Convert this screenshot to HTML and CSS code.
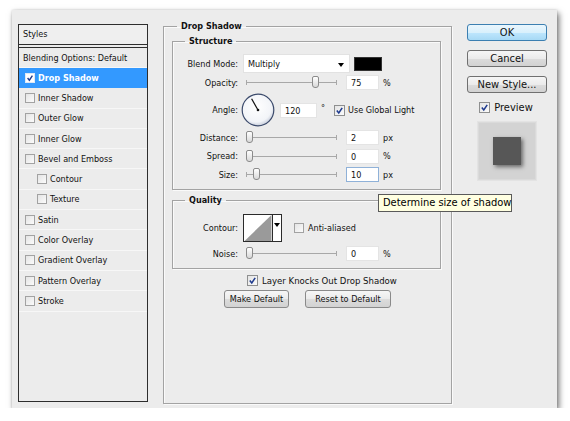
FILE: index.html
```html
<!DOCTYPE html>
<html>
<head>
<meta charset="utf-8">
<link rel="stylesheet" href="styles.css">
</head>
<body>
<div class="dialog">
  <div class="styles-panel">
    <div class="styles-head">Styles</div>
    <ul class="styles-list">
      <li class="row first">Blending Options: Default</li>
      <li class="row active"><span class="cb on"><svg viewBox="0 0 10 10"><polyline points="2,5 4.2,7.8 8,2"/></svg></span>Drop Shadow</li>
      <li class="row"><span class="cb"></span>Inner Shadow</li>
      <li class="row"><span class="cb"></span>Outer Glow</li>
      <li class="row"><span class="cb"></span>Inner Glow</li>
      <li class="row"><span class="cb"></span>Bevel and Emboss</li>
      <li class="row sub"><span class="cb"></span>Contour</li>
      <li class="row sub"><span class="cb"></span>Texture</li>
      <li class="row"><span class="cb"></span>Satin</li>
      <li class="row"><span class="cb"></span>Color Overlay</li>
      <li class="row"><span class="cb"></span>Gradient Overlay</li>
      <li class="row"><span class="cb"></span>Pattern Overlay</li>
      <li class="row"><span class="cb"></span>Stroke</li>
    </ul>
  </div>

  <fieldset class="group main">
    <legend class="lg-main">Drop Shadow</legend>
    <fieldset class="group inner structure">
      <legend class="lg-sub">Structure</legend>
      <div class="frow blend">
        <label class="lbl">Blend Mode:</label>
        <span class="select">Multiply<span class="arrow"></span></span>
        <span class="swatch"></span>
      </div>
      <div class="frow opacity">
        <label class="lbl">Opacity:</label>
        <span class="slider"><span class="thumb" style="left:66px"></span></span>
        <span class="num">75</span>
        <span class="unit">%</span>
      </div>
      <div class="frow angle">
        <label class="lbl">Angle:</label>
        <svg class="dial" viewBox="0 0 34 34" width="34" height="34">
          <defs>
            <radialGradient id="dg" cx="45%" cy="40%" r="60%">
              <stop offset="0" stop-color="#ffffff"/>
              <stop offset="0.8" stop-color="#f2f4f8"/>
              <stop offset="1" stop-color="#c9cfdc"/>
            </radialGradient>
          </defs>
          <circle cx="17" cy="17" r="15.8" fill="url(#dg)" stroke="#3b4a6b" stroke-width="1.2"/>
          <line x1="17" y1="17" x2="10.6" y2="5.7" stroke="#111" stroke-width="1.2"/>
          <circle cx="17" cy="17" r="1.3" fill="#111"/>
        </svg>
        <span class="num deg">120</span>
        <span class="unit degsym">°</span>
        <span class="cb on big"><svg viewBox="0 0 10 10"><polyline points="2,5 4.2,7.8 8,2"/></svg></span>
        <span class="cbtext">Use Global Light</span>
      </div>
      <div class="frow distance">
        <label class="lbl">Distance:</label>
        <span class="slider"><span class="thumb" style="left:0px"></span></span>
        <span class="num">2</span>
        <span class="unit">px</span>
      </div>
      <div class="frow spread">
        <label class="lbl">Spread:</label>
        <span class="slider"><span class="thumb" style="left:0px"></span></span>
        <span class="num">0</span>
        <span class="unit">%</span>
      </div>
      <div class="frow size">
        <label class="lbl">Size:</label>
        <span class="slider"><span class="thumb" style="left:7px"></span></span>
        <span class="num focus">10</span>
        <span class="unit">px</span>
      </div>
    </fieldset>

    <fieldset class="group inner quality">
      <legend class="lg-sub">Quality</legend>
      <div class="frow contour">
        <label class="lbl">Contour:</label>
        <span class="curve">
          <svg viewBox="0 0 29 28" width="29" height="28"><polygon points="0,28 29,0 29,28" fill="#9a9a9a"/></svg>
          <span class="drop"><span class="arrow"></span></span>
        </span>
        <span class="cb"></span>
        <span class="cbtext">Anti-aliased</span>
      </div>
      <div class="frow noise">
        <label class="lbl">Noise:</label>
        <span class="slider"><span class="thumb" style="left:0px"></span></span>
        <span class="num">0</span>
        <span class="unit">%</span>
      </div>
    </fieldset>

    <div class="knock">
      <span class="cb on big"><svg viewBox="0 0 10 10"><polyline points="2,5 4.2,7.8 8,2"/></svg></span>
      <span class="cbtext">Layer Knocks Out Drop Shadow</span>
    </div>
    <div class="defaults">
      <button class="btn small make">Make Default</button>
      <button class="btn small reset">Reset to Default</button>
    </div>
  </fieldset>

  <div class="side">
    <button class="btn big ok">OK</button>
    <button class="btn big">Cancel</button>
    <button class="btn big">New Style...</button>
    <div class="preview-row">
      <span class="cb on big"><svg viewBox="0 0 10 10"><polyline points="2,5 4.2,7.8 8,2"/></svg></span>
      <span class="pv-text">Preview</span>
    </div>
    <div class="preview"><span class="pv-square"></span></div>
  </div>

  <div class="tooltip">Determine size of shadow</div>
</div>
</body>
</html>
```

FILE: styles.css
```css
* { box-sizing: border-box; }

body {
  margin: 0;
  background: #ffffff;
  font-family: "DejaVu Sans Condensed", "DejaVu Sans", "Liberation Sans", sans-serif;
  font-stretch: condensed;
  font-size: 9px;
  color: #111;
}

.dialog {
  position: relative;
  display: flex;
  align-items: stretch;
  margin: 10px 0 0 12px;
  width: 545px;
  height: 398px;
  padding: 10px 10px 4px 6px;
  background: #ececec;
  box-shadow: 2px 3px 6px rgba(0, 0, 0, 0.55), 0 0 2px rgba(0, 0, 0, 0.15);
}

/* ---------- Styles list ---------- */
.styles-panel {
  width: 130px;
  flex: none;
  margin: 4px 0 2px 0;
  border: 1px solid #2e2e2e;
  display: flex;
  flex-direction: column;
  background: #ececec;
}

.styles-head {
  height: 20px;
  line-height: 19px;
  padding-left: 4px;
  border-bottom: 1px solid #2e2e2e;
  margin-bottom: 2px;
  background: #efefef;
}

.styles-list {
  list-style: none;
  margin: 0;
  padding: 0;
  flex: 1;
  border-top: 1px solid #2e2e2e;
}

.row {
  display: flex;
  align-items: center;
  height: 20.3px;
  padding-left: 6px;
  border-bottom: 1px solid #f7f7f7;
  white-space: nowrap;
}

.row.first {
  height: 20px;
  padding-left: 4px;
}

.row.sub { padding-left: 18px; }

.row .cb { margin-right: 3px; }

.row.active {
  background: #3399ff;
  color: #fff;
  font-weight: bold;
  border-bottom-color: #3399ff;
}

/* ---------- checkboxes ---------- */
.cb {
  display: inline-flex;
  flex: none;
  width: 10px;
  height: 10px;
  border: 1px solid #a2a2a2;
  background: linear-gradient(135deg, #e4e4e4, #fbfbfb);
}

.cb.big {
  width: 11px;
  height: 11px;
  border-color: #8e8f8f;
}

.cb svg {
  width: 100%;
  height: 100%;
  display: block;
}

.cb polyline {
  fill: none;
  stroke: #1f3b8e;
  stroke-width: 1.7;
}

.row.active .cb {
  background: #fff;
  border-color: #dfe9f5;
}

.cbtext { white-space: nowrap; }

/* ---------- group boxes ---------- */
.group {
  margin: 0;
  min-width: 0;
  border: 1px solid #a3a3a3;
  box-shadow: 1px 1px 0 #fafafa, inset 1px 1px 0 #fafafa;
}

.main {
  width: 289px;
  flex: none;
  margin-left: 15px;
  padding: 0 10px 0 8px;
}

legend {
  font-weight: bold;
  line-height: 12px;
  padding: 0 4px;
  color: #111;
}

.lg-main { margin-left: 5px; }
.lg-sub { margin-left: 12px; }

.inner {
  padding: 0 0 7px 0;
}

.structure { margin-top: 3px; }
.quality { margin-top: 4px; padding-bottom: 7px; }

/* ---------- form rows ---------- */
.frow {
  display: flex;
  align-items: center;
  white-space: nowrap;
}

.lbl {
  width: 65px;
  flex: none;
  text-align: right;
}

.blend { margin-top: 7px; height: 19px; }
.opacity { margin-top: 2px; height: 15px; }
.angle { margin-top: 3px; height: 34px; }
.distance { margin-top: 3px; height: 15px; }
.spread { margin-top: 3.5px; height: 15px; }
.size { margin-top: 3.5px; height: 15px; }
.contour { margin-top: 8px; height: 28px; }
.noise { margin-top: 4px; height: 15px; }

.select {
  position: relative;
  margin-left: 5px;
  width: 107px;
  height: 19px;
  line-height: 18px;
  padding-left: 4px;
  background: #fff;
  border: 1px solid #e2e2e2;
}

.arrow {
  position: absolute;
  right: 5px;
  top: 8px;
  width: 0;
  height: 0;
  border-left: 3px solid transparent;
  border-right: 3px solid transparent;
  border-top: 4px solid #000;
}

.swatch {
  margin-left: 4px;
  width: 28px;
  height: 14px;
  background: #000;
  border: 1px solid #333;
}

.slider {
  position: relative;
  margin-left: 8px;
  width: 91px;
  height: 15px;
  flex: none;
}

.slider::before {
  content: "";
  position: absolute;
  left: 0;
  right: 0;
  top: 7px;
  height: 1px;
  background: #a8a8a8;
}

.slider::after {
  content: "";
  position: absolute;
  left: 0;
  right: 0;
  top: 5px;
  height: 5px;
  border-left: 1px solid #a8a8a8;
  border-right: 1px solid #a8a8a8;
}

.thumb {
  position: absolute;
  top: 1px;
  width: 7px;
  height: 12px;
  border: 1px solid #8b8b8b;
  border-radius: 2px 2px 3px 3px;
  background: linear-gradient(#ffffff, #d8d8d8);
  z-index: 1;
}

.num {
  margin-left: 9px;
  width: 33px;
  height: 15px;
  line-height: 14px;
  padding-left: 4px;
  background: #fff;
  border: 1px solid #e4e4e4;
  flex: none;
}

.num.focus { border-color: #8fb1d8; }

.num.deg {
  margin-left: 5px;
  width: 37px;
}

.unit { margin-left: 4px; }

.degsym { margin-left: 4px; margin-top: -4px; }

.angle .dial { margin-left: 3px; flex: none; }

.angle .cb { margin-left: 9px; margin-right: 3px; }

.curve {
  position: relative;
  display: flex;
  margin-left: 5px;
  height: 28px;
  border: 1px solid #2b2b2b;
  background: #fff;
}

.curve svg {
  display: block;
  width: 28px;
  height: 26px;
}

.curve .drop {
  position: relative;
  width: 9px;
  border-left: 1px solid #2b2b2b;
  background: #fff;
}

.curve .drop .arrow { right: 1px; top: 8px; }

.contour .cb { margin-left: 12px; margin-right: 4px; }

/* ---------- bottom of main panel ---------- */
.knock {
  display: flex;
  align-items: center;
  margin: 5px 0 0 75px;
  height: 12px;
  font-size: 9.5px;
}

.knock .cb { margin-right: 4px; }

.defaults {
  display: flex;
  justify-content: center;
  gap: 16px;
  margin-top: 4px;
  padding-left: 2px;
}

.btn {
  font-family: inherit;
  font-stretch: condensed;
  color: #111;
  border: 1px solid #8a8a8a;
  border-radius: 3px;
  background: linear-gradient(#f6f6f6 0%, #ebebeb 50%, #dcdcdc 51%, #d2d2d2 100%);
  padding: 0;
  margin: 0;
  cursor: default;
}

.btn.small {
  height: 18px;
  font-size: 9px;
}

.make { width: 65px; }
.reset { width: 86px; }

/* ---------- right column ---------- */
.side {
  width: 80px;
  flex: none;
  margin: 4px 0 0 15px;
  display: flex;
  flex-direction: column;
  align-items: center;
}

.btn.big {
  width: 80px;
  height: 17px;
  font-size: 11px;
  line-height: 15px;
  margin-bottom: 9px;
  border-color: #707070;
}

.btn.ok {
  border-color: #3c7fb1;
  background: linear-gradient(#eaf6fd 0%, #d9f0fc 50%, #bee6fd 51%, #a7d9f5 100%);
}

.preview-row {
  display: flex;
  align-items: center;
  margin-top: -1px;
  height: 12px;
  font-size: 11px;
  padding-right: 2px;
}

.preview-row .cb { margin-right: 4px; }

.preview {
  margin-top: 8px;
  width: 60px;
  height: 60px;
  background: #d3d3d3;
  border: 1px solid #e3e3e3;
  box-shadow: inset 0 0 0 1px #dadada;
  display: flex;
  align-items: center;
  justify-content: center;
}

.pv-square {
  width: 28px;
  height: 28px;
  background: #575757;
  box-shadow: 2px 2px 4px rgba(0, 0, 0, 0.5);
}

/* ---------- tooltip ---------- */
.tooltip {
  position: absolute;
  left: 366px;
  top: 184px;
  width: 134px;
  height: 18px;
  line-height: 16px;
  padding-left: 4px;
  font-size: 11px;
  white-space: nowrap;
  background: #ffffe1;
  border: 1px solid #5a5a5a;
  color: #000;
  z-index: 5;
}
```
